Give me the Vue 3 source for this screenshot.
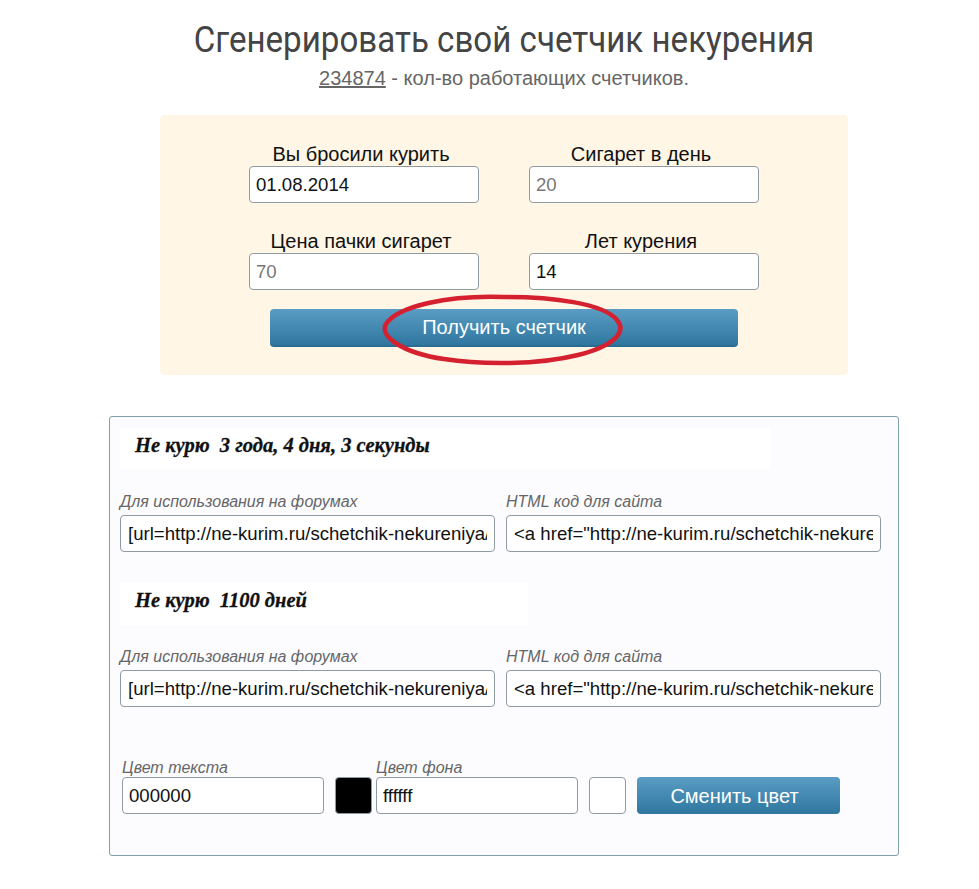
<script setup>
const fields = [
  { label: 'Вы бросили курить', value: '01.08.2014' },
  { label: 'Сигарет в день', placeholder: '20' },
  { label: 'Цена пачки сигарет', placeholder: '70' },
  { label: 'Лет курения', value: '14' },
];

const counters = [
  { text: 'Не курю  3 года, 4 дня, 3 секунды', width: '650px' },
  { text: 'Не курю  1100 дней', width: '408px' },
];

const forumCode = '[url=http://ne-kurim.ru/schetchik-nekureniya/][img]http://ne-kurim.ru/counter.png[/img][/url]';
const htmlCode = '<a href="http://ne-kurim.ru/schetchik-nekureniya/"><img src="http://ne-kurim.ru/counter.png"></a>';
</script>

<template>
  <div class="page">
    <h1 class="title">Сгенерировать свой счетчик некурения</h1>
    <p class="subtitle"><a class="count" href="#">234874</a> - кол-во работающих счетчиков.</p>

    <form class="generator" @submit.prevent>
      <div class="fields">
        <label v-for="field in fields" :key="field.label" class="field">
          <span class="field-label">{{ field.label }}</span>
          <input class="input" type="text" :value="field.value" :placeholder="field.placeholder" />
        </label>
      </div>
      <div class="submit-wrap">
        <button class="btn btn-wide" type="submit">Получить счетчик</button>
        <svg class="circle-mark" width="250" height="74" viewBox="0 0 250 74" fill="none">
          <path
            d="M126 4C70 2 20 13 8 31C1 43 24 60 66 66C104 72 160 72 200 62C236 53 249 39 239 27C226 11 176 3 118 4"
            stroke="#d5202f"
            stroke-width="4.5"
            stroke-linecap="round"
          />
        </svg>
      </div>
    </form>

    <section class="result">
      <div v-for="counter in counters" :key="counter.width" class="counter">
        <div class="banner" :style="{ width: counter.width }">{{ counter.text }}</div>
        <div class="codes">
          <label class="code">
            <span class="hint">Для использования на форумах</span>
            <input class="input input-code" type="text" :value="forumCode" />
          </label>
          <label class="code">
            <span class="hint">HTML код для сайта</span>
            <input class="input input-code" type="text" :value="htmlCode" />
          </label>
        </div>
      </div>

      <div class="colors">
        <label class="color">
          <span class="hint">Цвет текста</span>
          <input class="input" type="text" value="000000" />
        </label>
        <span class="swatch swatch-black"></span>
        <label class="color color-bg">
          <span class="hint">Цвет фона</span>
          <input class="input" type="text" value="ffffff" />
        </label>
        <span class="swatch"></span>
        <button class="btn btn-color" type="button">Сменить цвет</button>
      </div>
    </section>
  </div>
</template>

<style scoped>
.page {
  width: 790px;
  margin-left: 109px;
  padding-top: 19px;
  font-family: "Liberation Sans", Arial, sans-serif;
  color: #111;
}

.title {
  margin: 0;
  font-family: Roboto, sans-serif;
  font-size: 37px;
  line-height: 42px;
  font-weight: 400;
  text-align: center;
  color: #444;
  transform: scaleX(0.895);
}

.subtitle {
  margin: 5px 0 0;
  font-size: 20px;
  line-height: 24px;
  text-align: center;
  color: #666;
}

.count {
  color: #666;
}

.generator {
  width: 688px;
  height: 260px;
  box-sizing: border-box;
  margin: 25px auto 0;
  padding-top: 28px;
  background: #fff6e6;
  border-radius: 5px;
}

.fields {
  display: grid;
  grid-template-columns: 230px 230px;
  justify-content: center;
  column-gap: 50px;
  row-gap: 27px;
}

.field {
  display: flex;
  flex-direction: column;
}

.field-label {
  padding-right: 6px;
  font-size: 20px;
  line-height: 23px;
  text-align: center;
}

.input {
  width: 100%;
  height: 37px;
  box-sizing: border-box;
  padding: 0 6px;
  border: 1px solid #8f9ba3;
  border-radius: 4px;
  background: #fff;
  font-family: "Liberation Sans", Arial, sans-serif;
  font-size: 18.6px;
  color: #111;
  outline: none;
}

.input::placeholder {
  color: #777;
  opacity: 1;
}

.input-code {
  padding: 0 7px;
}

.submit-wrap {
  position: relative;
  width: 468px;
  margin: 19px auto 0;
}

.btn {
  display: block;
  border: 0;
  border-radius: 4px;
  background: linear-gradient(#5a9cc4, #2f779f);
  font-family: "Liberation Sans", Arial, sans-serif;
  font-size: 20px;
  color: #fff;
  cursor: pointer;
}

.btn-wide {
  width: 100%;
  height: 38px;
  padding-top: 2px;
  border-bottom: 2px solid #2a6d93;
}

.circle-mark {
  position: absolute;
  left: 108px;
  top: -16px;
  pointer-events: none;
}

.result {
  height: 440px;
  box-sizing: border-box;
  margin-top: 41px;
  padding: 11px 17px 0 10px;
  background: #fcfcff;
  border: 1px solid #7da0ab;
  border-radius: 3px;
}

.counter {
  margin-bottom: 31px;
}

.banner {
  box-sizing: border-box;
  height: 42px;
  padding-left: 15px;
  background: #fff;
  font-family: "Liberation Serif", serif;
  font-style: italic;
  font-weight: 700;
  font-size: 20.5px;
  line-height: 34px;
  white-space: pre;
  color: #111;
  -webkit-text-stroke: 0.3px #111;
}

.codes {
  display: grid;
  grid-template-columns: 375px 375px;
  column-gap: 11px;
  margin-top: 22px;
}

.code {
  display: flex;
  flex-direction: column;
  gap: 3px;
}

.hint {
  font-size: 16px;
  line-height: 20px;
  font-style: italic;
  color: #666;
}

.colors {
  display: flex;
  align-items: flex-end;
  margin: 51px 0 0 2px;
}

.color {
  display: flex;
  flex-direction: column;
  width: 202px;
}

.color .hint {
  margin-bottom: -1px;
}

.color-bg {
  margin-left: 4px;
}

.swatch {
  width: 37px;
  height: 37px;
  box-sizing: border-box;
  margin-left: 11px;
  border: 1px solid #8f9ba3;
  border-radius: 4px;
  background: #fff;
}

.swatch-black {
  background: #000;
}

.btn-color {
  width: 203px;
  height: 37px;
  margin-left: 11px;
  padding: 2px 8px 0 0;
}
</style>
